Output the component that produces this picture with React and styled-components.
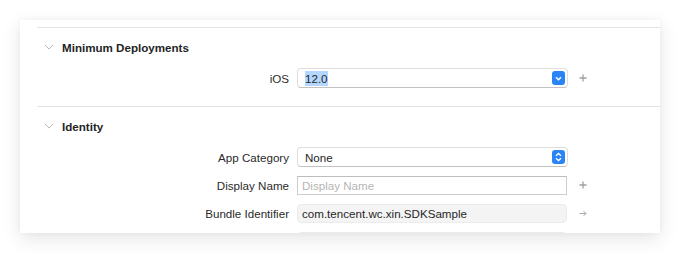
import React from 'react';
import styled, { createGlobalStyle } from 'styled-components';

const GlobalStyle = createGlobalStyle`
    html, body {
        margin: 0;
        padding: 0;
        background: #ffffff;
    }
    body {
        font-family: "Liberation Sans", Arial, sans-serif;
        -webkit-font-smoothing: antialiased;
    }
`;

const Page = styled.div`
    padding: 20px 20px 0 20px;
    height: 254px;
    box-sizing: border-box;
`;

const Card = styled.div`
    width: 640px;
    height: 213px;
    background: #fff;
    box-shadow: 0 6px 18px rgba(0, 0, 0, 0.10), 0 0 6px rgba(0, 0, 0, 0.04);
    overflow: hidden;
    padding: 7px 0 0 17px;
    box-sizing: border-box;
`;

const Section = styled.section`
    border-top: 1px solid #e3e3e3;
    padding-bottom: ${p => p.$pb || 0}px;
`;

const Header = styled.div`
    display: flex;
    align-items: center;
    height: ${p => p.$h}px;
    padding-top: 2px;
    box-sizing: border-box;
    font-size: 11.6px;
    font-weight: bold;
    color: #242424;
`;

const Chevron = styled.span`
    display: flex;
    width: 10px;
    margin: 0 8px 0 7px;
`;

const Row = styled.div`
    display: grid;
    grid-template-columns: 252px 271px 22px;
    column-gap: 8px;
    align-items: center;
    height: 28px;
`;

const Label = styled.div`
    text-align: right;
    font-size: 11.6px;
    color: #2a2a2a;
`;

const Popup = styled.div`
    position: relative;
    display: flex;
    align-items: center;
    height: 18px;
    border: 1px solid #dedede;
    border-bottom-color: #c2c2c2;
    border-radius: 4px;
    background: #fff;
    padding-left: 7px;
    font-size: 11.6px;
    color: #262626;
    box-sizing: content-box;
`;

const Selected = styled.span`
    background: #b3d7ff;
    padding: 1px 0;
`;

const Stepper = styled.span`
    position: absolute;
    right: 2px;
    top: 2px;
    width: 13px;
    height: 14px;
    border-radius: 3px;
    background: #2a84f7;
    display: flex;
    align-items: center;
    justify-content: center;
`;

const Field = styled.div`
    display: flex;
    align-items: center;
    height: 17px;
    border: 1px solid ${p => (p.$filled ? '#ececec' : '#cdcdcd')};
    border-top-color: ${p => (p.$filled ? '#ececec' : '#bdbdbd')};
    border-radius: ${p => (p.$filled ? 4 : 0)}px;
    background: ${p => (p.$filled ? '#f4f4f4' : '#fff')};
    padding-left: 4px;
    margin-right: 1px;
    font-size: 11.6px;
    color: ${p => (p.$placeholder ? '#b5b5b5' : '#262626')};
`;

const Accessory = styled.span`
    display: flex;
    padding-left: 3px;
`;

const ChevronDown = () => (
    <svg width="10" height="6" viewBox="0 0 10 6">
        <path d="M1 1 L5 5 L9 1" fill="none" stroke="#b8b8b8" strokeWidth="1" />
    </svg>
);

const Plus = () => (
    <svg width="8" height="8" viewBox="0 0 8 8">
        <path d="M4 0.5 V7.5 M0.5 4 H7.5" stroke="#a0a0a0" strokeWidth="1.3" />
    </svg>
);

const Arrow = () => (
    <svg width="8" height="7" viewBox="0 0 8 7">
        <path d="M0.5 3.5 H7 M4.5 1 L7 3.5 L4.5 6" fill="none" stroke="#a8a8a8" strokeWidth="1" />
    </svg>
);

const StepDown = () => (
    <svg width="7" height="5" viewBox="0 0 7 5">
        <path d="M1 1.2 L3.5 3.7 L6 1.2" fill="none" stroke="#fff" strokeWidth="1.5" />
    </svg>
);

const StepUpDown = () => (
    <svg width="7" height="10" viewBox="0 0 7 10">
        <path d="M1 3.7 L3.5 1.4 L6 3.7 M1 6.3 L3.5 8.6 L6 6.3" fill="none" stroke="#fff" strokeWidth="1.3" />
    </svg>
);

const App = () => (
    <Page>
        <GlobalStyle />
        <Card>
            <Section $pb={14}>
                <Header $h={36}>
                    <Chevron><ChevronDown /></Chevron>
                    Minimum Deployments
                </Header>
                <Row>
                    <Label>iOS</Label>
                    <Popup>
                        <Selected>12.0</Selected>
                        <Stepper><StepDown /></Stepper>
                    </Popup>
                    <Accessory><Plus /></Accessory>
                </Row>
            </Section>
            <Section>
                <Header $h={36}>
                    <Chevron><ChevronDown /></Chevron>
                    Identity
                </Header>
                <Row>
                    <Label>App Category</Label>
                    <Popup>
                        None
                        <Stepper><StepUpDown /></Stepper>
                    </Popup>
                    <span />
                </Row>
                <Row>
                    <Label>Display Name</Label>
                    <Field $placeholder>Display Name</Field>
                    <Accessory><Plus /></Accessory>
                </Row>
                <Row>
                    <Label>Bundle Identifier</Label>
                    <Field $filled>com.tencent.wc.xin.SDKSample</Field>
                    <Accessory><Arrow /></Accessory>
                </Row>
                <Row>
                    <Label />
                    <Field $filled />
                    <span />
                </Row>
            </Section>
        </Card>
    </Page>
);

export default App;
